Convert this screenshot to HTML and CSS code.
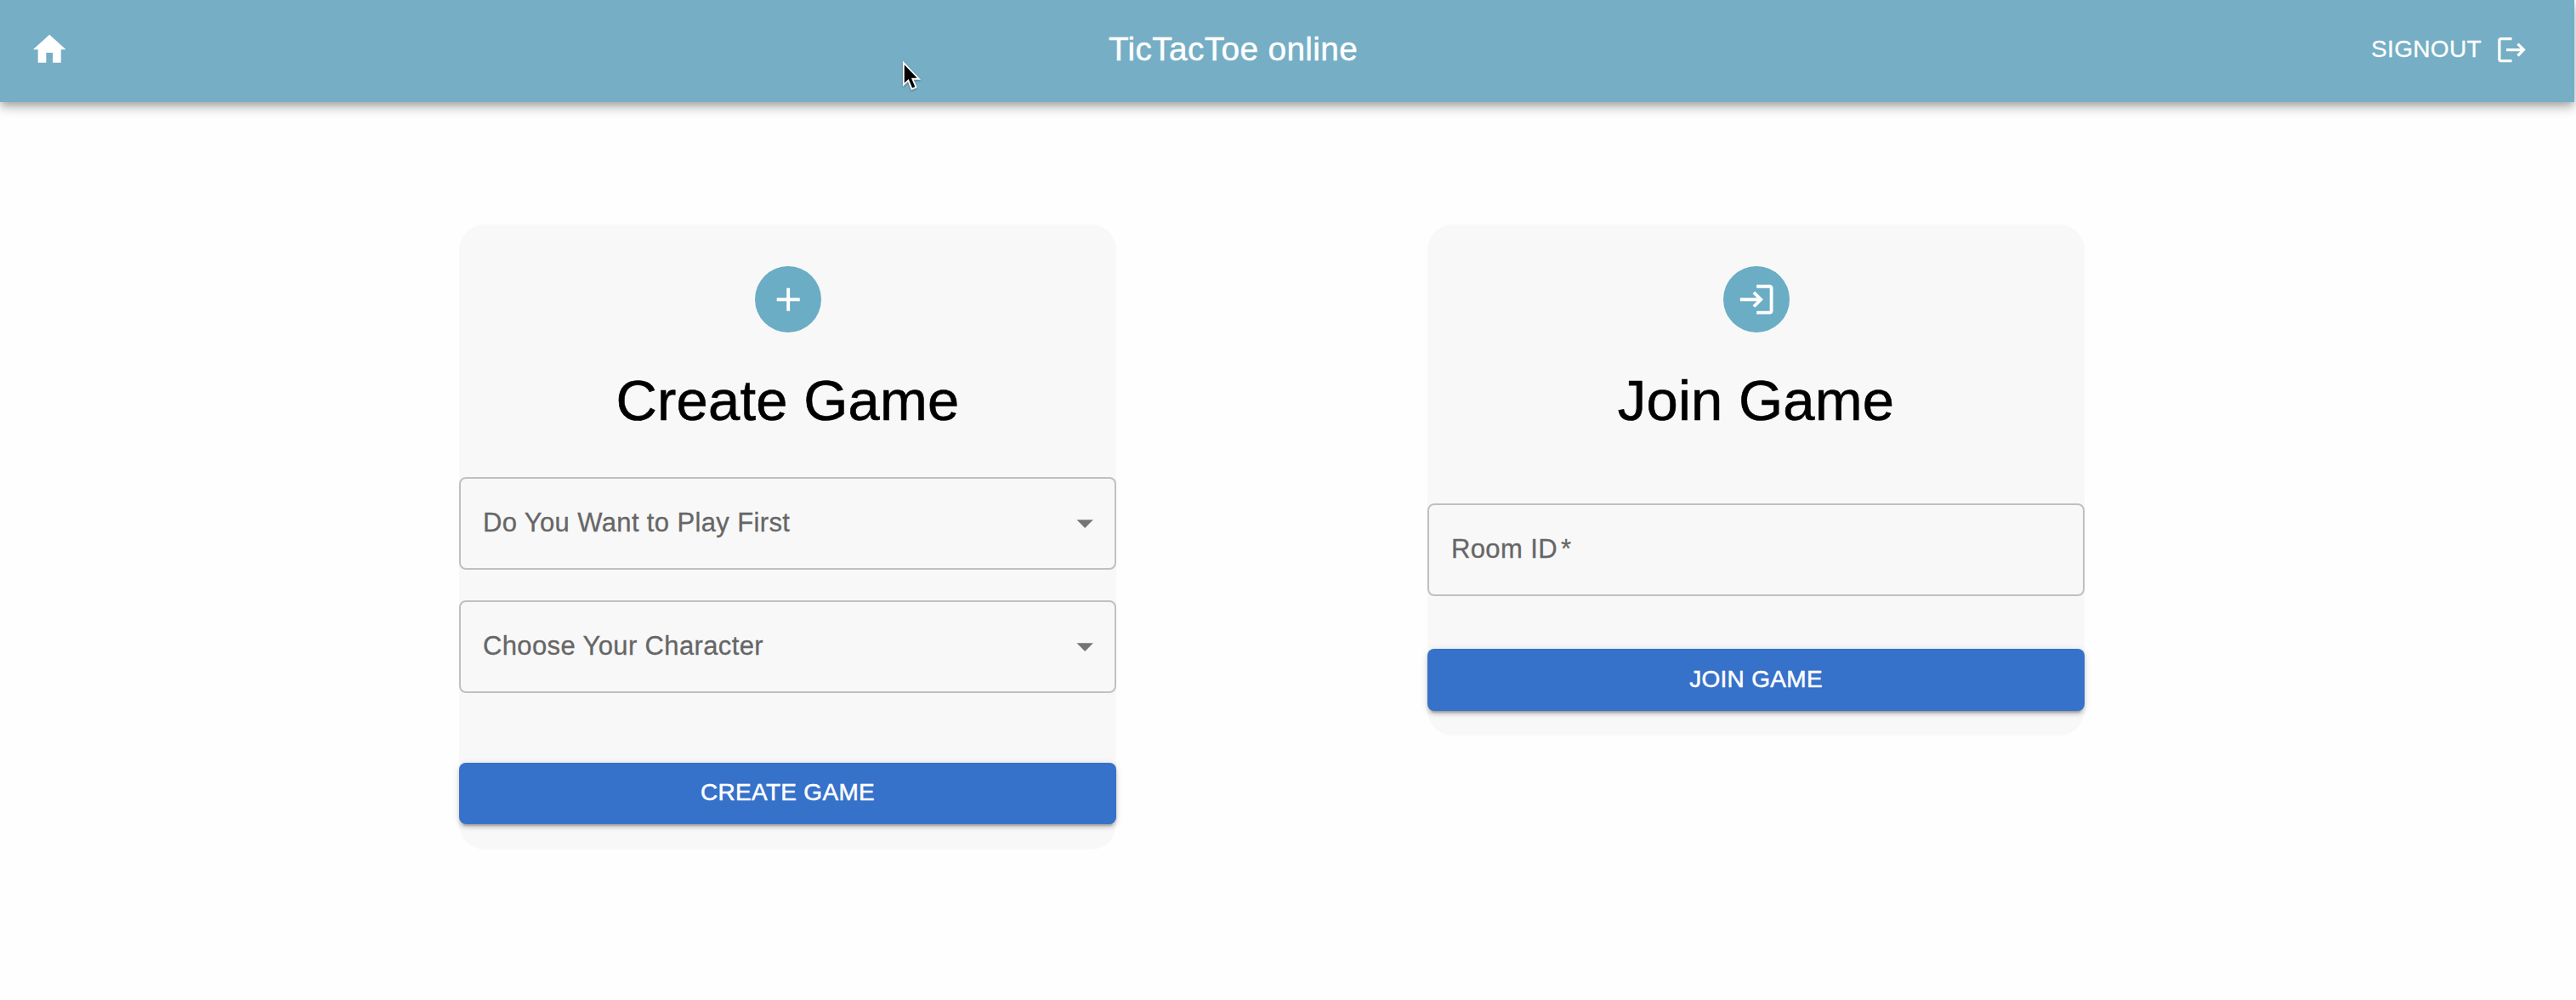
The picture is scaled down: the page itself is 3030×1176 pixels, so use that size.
FILE: index.html
```html
<!DOCTYPE html>
<html lang="en">
<head>
<meta charset="utf-8">
<title>TicTacToe online</title>
<link rel="stylesheet" href="styles.css">
</head>
<body>
<header class="appbar">
  <a class="home" aria-label="Home"><svg class="icon" viewBox="0 0 24 24"><path d="M10 20v-6h4v6h5v-8h3L12 3 2 12h3v8z"/></svg></a>
  <h1 class="title">TicTacToe online</h1>
  <a class="signout"><span class="signout-text">SIGNOUT</span><svg class="icon icon-small" viewBox="0 0 24 24"><path d="m17 7-1.41 1.41L18.17 11H8v2h10.17l-2.58 2.58L17 17l5-5zM4 5h8V3H4c-1.1 0-2 .9-2 2v14c0 1.1.9 2 2 2h8v-2H4V5z"/></svg></a>
</header>
<main class="cards">
  <section class="card">
    <div class="avatar"><svg class="icon" viewBox="0 0 24 24"><path d="M19 13h-6v6h-2v-6H5v-2h6V5h2v6h6v2z"/></svg></div>
    <h2 class="heading">Create Game</h2>
    <div class="field field-first"><span>Do You Want to Play First</span><svg class="icon caret" viewBox="0 0 24 24"><path d="m7 10 5 5 5-5z"/></svg></div>
    <div class="field field-second"><span>Choose Your Character</span><svg class="icon caret" viewBox="0 0 24 24"><path d="m7 10 5 5 5-5z"/></svg></div>
    <button class="button button-create">CREATE GAME</button>
  </section>
  <section class="card">
    <div class="avatar"><svg class="icon" viewBox="0 0 24 24"><path d="M11 7 9.6 8.4l2.6 2.6H2v2h10.2l-2.6 2.6L11 17l5-5-5-5zm9 12h-8v2h8c1.1 0 2-.9 2-2V5c0-1.1-.9-2-2-2h-8v2h8v14z"/></svg></div>
    <h2 class="heading">Join Game</h2>
    <div class="field field-room"><span>Room ID<span class="required">*</span></span></div>
    <button class="button button-join">JOIN GAME</button>
  </section>
</main>
<svg class="cursor" viewBox="0 0 24 38"><path d="M1.5 2v28l6-5.5 4.5 11 5.5-2.3-4.6-10.7h8.2z" fill="#000" stroke="#fff" stroke-width="2"/></svg>
</body>
</html>
```
FILE: styles.css
```css
* { box-sizing: border-box; }
body {
  margin: 0;
  min-height: 1176px;
  background: #fefefe;
  font-family: "Liberation Sans", Arial, sans-serif;
  overflow: hidden;
}
.icon { width: 46.4px; height: 46.4px; fill: currentColor; flex: none; display: block; }
.icon-small { width: 39px; height: 39px; }

.appbar {
  width: 3028px;
  height: 120px;
  padding: 0 54px 4px 35px;
  display: grid;
  grid-template-columns: 1269px auto 1fr;
  align-items: center;
  background: #75aec5;
  color: #fff;
  box-shadow: 0 4px 8px -2px rgba(0,0,0,.2), 0 8px 10px rgba(0,0,0,.14), 0 2px 19px rgba(0,0,0,.12);
}
.title {
  margin: 0;
  font-size: 38.7px;
  font-weight: 400;
  line-height: 46px;
  letter-spacing: .4px;
  -webkit-text-stroke: .5px;
}
.signout {
  display: flex;
  align-items: center;
  justify-content: flex-end;
  gap: 16px;
  font-size: 28px;
  letter-spacing: .35px;
}
.signout-text { padding-bottom: 1px; -webkit-text-stroke: .3px; }

.cards {
  display: flex;
  align-items: flex-start;
  gap: 366px;
  padding: 144px 0 0 540px;
}
.card {
  width: 773px;
  padding: 49px 0 30px;
  border-radius: 30px;
  background: #f8f8f8;
  display: flex;
  flex-direction: column;
}
.avatar {
  width: 78px;
  height: 78px;
  padding: 1px 0 0 1px;
  border-radius: 50%;
  align-self: center;
  display: grid;
  place-items: center;
  background: #6aadc5;
  color: #fff;
}
.heading {
  margin: 40px 0 0;
  height: 79px;
  line-height: 80px;
  font-size: 67px;
  font-weight: 400;
  letter-spacing: .15px;
  text-align: center;
  color: #000;
  -webkit-text-stroke: .6px;
}
.field {
  height: 109px;
  padding: 0 12px 2px 26px;
  border: 2px solid #c0c0c0;
  border-radius: 8px;
  display: flex;
  align-items: center;
  justify-content: space-between;
  font-size: 31px;
  letter-spacing: .37px;
  color: #666;
  -webkit-text-stroke: .3px;
}
.field-first { margin-top: 51px; }
.field-second { margin-top: 36px; }
.field-room { margin-top: 82px; }
.caret { color: #757575; margin-top: 2px; }
.required { margin-left: 4px; }
.button {
  height: 72px;
  padding: 0 0 2px;
  border: 0;
  border-radius: 8px;
  background: #3671ca;
  color: #fff;
  font: 500 28px/50px "Liberation Sans", Arial, sans-serif;
  letter-spacing: .3px;
  -webkit-text-stroke: .5px;
  box-shadow: 0 6px 2px -4px rgba(0,0,0,.2), 0 4px 4px rgba(0,0,0,.14), 0 2px 10px rgba(0,0,0,.12);
}
.button-create { margin-top: 82px; }
.button-join { margin-top: 62px; height: 73px; padding-bottom: 1px; margin-bottom: -1px; }

.cursor {
  position: absolute;
  left: 1061px;
  top: 72px;
  width: 23px;
  height: 35px;
  filter: drop-shadow(0 1px 1px rgba(0,0,0,.35));
}
```
